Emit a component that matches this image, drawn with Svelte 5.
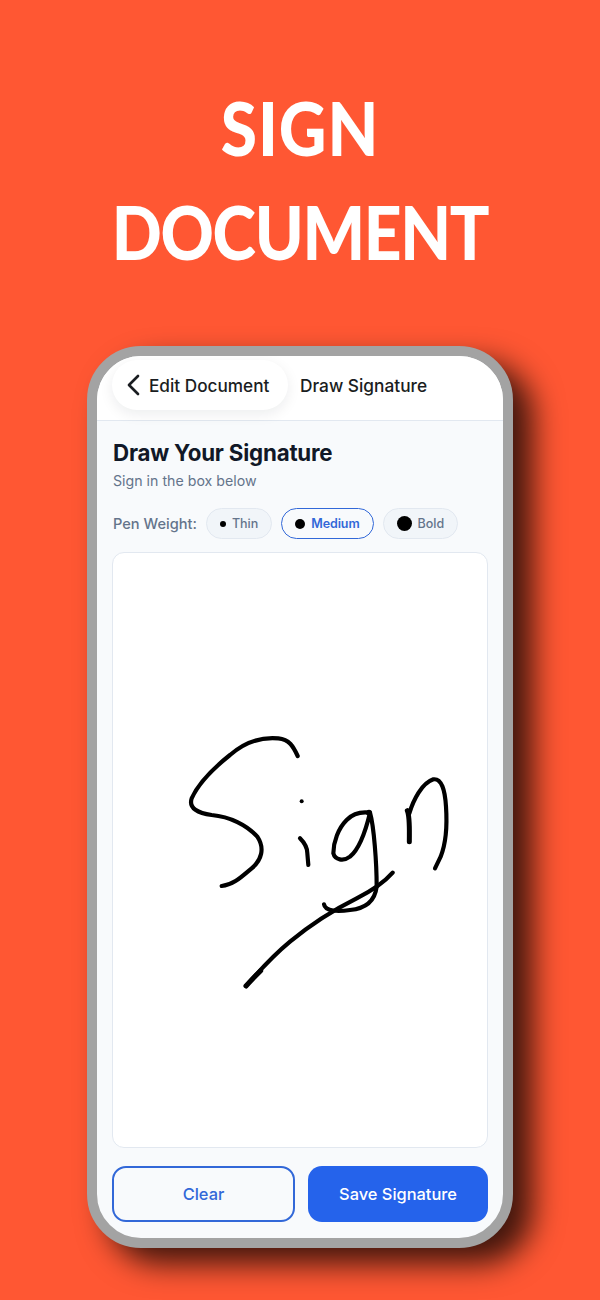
<script lang="ts">
  const weights = [
    { label: 'Thin', size: 6, active: false },
    { label: 'Medium', size: 10, active: true },
    { label: 'Bold', size: 15, active: false }
  ];

  // Strokes traced from the drawn signature
  const strokes = [
    'M383 108C370 80 358 58 325 55C270 50 220 70 180 105C130 145 85 190 65 235C55 265 85 280 125 285C180 290 230 315 262 350C285 385 275 420 245 445C215 470 190 495 155 498',
    'M390 355C405 370 412 385 412 400L415 435',
    'M597 278C570 275 545 285 530 300C505 325 490 365 490 400C495 420 520 425 540 410C570 385 590 320 600 278C612 320 620 430 620 500C615 540 590 565 540 570C505 575 465 575 462 553',
    'M718 280C730 240 755 190 790 178C815 175 825 210 828 260C832 320 828 370 812 410L795 445',
    'M668 458C640 490 610 510 560 535C490 570 420 615 360 665C315 702 270 750 228 798'
  ];
</script>

<div class="page">
  <h1>
    <span class="line sign">SIGN</span>
    <span class="line doc">DOCUMENT</span>
  </h1>

  <div class="phone">
    <header class="topbar">
      <div class="back">
        <svg width="14" height="22" viewBox="0 0 14 22" fill="none">
          <path d="M12 2L3 11L12 20" stroke="#1a1d21" stroke-width="2.7" stroke-linecap="round" stroke-linejoin="round" />
        </svg>
        <span>Edit Document</span>
      </div>
      <span class="screen-title">Draw Signature</span>
    </header>

    <main class="content">
      <h2>Draw Your Signature</h2>
      <p class="hint">Sign in the box below</p>

      <div class="pen-row">
        <span class="pen-label">Pen Weight:</span>
        {#each weights as w}
          <div class="chip" class:active={w.active}>
            <span class="dot" style="width: {w.size}px; height: {w.size}px"></span>
            {w.label}
          </div>
        {/each}
      </div>

      <div class="canvas">
        <svg class="signature" viewBox="0 0 900 840" fill="none">
          {#each strokes as d}
            <path {d} stroke="#000" stroke-width="12.5" stroke-linecap="round" stroke-linejoin="round" />
          {/each}
          <circle cx="395" cy="244" r="6" fill="#000" />
          <circle cx="597" cy="278" r="9" fill="#000" />
          <path d="M712 272C720 290 718 330 718 365" stroke="#000" stroke-width="15" stroke-linecap="round" />
          <path d="M228 798C245 779 256 768 272 752" stroke="#000" stroke-width="15" stroke-linecap="round" />
        </svg>
      </div>

      <div class="actions">
        <button class="btn clear">Clear</button>
        <button class="btn save">Save Signature</button>
      </div>
    </main>
  </div>
</div>

<style>
  :global(body) {
    margin: 0;
    background: #ff5733;
  }

  .page {
    width: 600px;
    height: 1300px;
    overflow: hidden;
    background: #ff5733;
    padding-top: 76px;
    box-sizing: border-box;
  }

  h1 {
    margin: 0 0 62px;
    text-align: center;
    color: #fff;
    font-family: 'Lato', sans-serif;
    font-weight: 900;
    font-size: 74px;
    line-height: 104px;
  }

  .line {
    display: block;
    transform: scaleX(0.89);
  }

  .sign {
    letter-spacing: 1px;
  }

  .doc {
    letter-spacing: -1.5px;
  }

  .phone {
    width: 426px;
    height: 902px;
    margin: 0 auto;
    box-sizing: border-box;
    border: 10px solid #a3a3a3;
    border-radius: 54px;
    background: #f8fafc;
    overflow: hidden;
    box-shadow: 20px 16px 30px rgba(0, 0, 0, 0.75);
    font-family: 'Inter', sans-serif;
    display: flex;
    flex-direction: column;
  }

  .topbar {
    height: 65px;
    flex: none;
    box-sizing: border-box;
    background: #fff;
    border-bottom: 1px solid #e2e8f0;
    display: flex;
    align-items: flex-start;
    padding: 4px 0 0 15px;
  }

  .back {
    width: 176px;
    height: 50px;
    box-sizing: border-box;
    border-radius: 25px;
    background: #fff;
    box-shadow: 0 4px 14px rgba(15, 23, 42, 0.08);
    display: flex;
    align-items: center;
    gap: 9px;
    padding-left: 14px;
    font-size: 17.2px;
    font-weight: 500;
    color: #1a1d21;
  }

  .screen-title {
    margin-left: 12px;
    line-height: 52px;
    font-size: 17.3px;
    font-weight: 500;
    color: #1a1d21;
  }

  .content {
    flex: 1;
    display: flex;
    flex-direction: column;
    padding: 0 15px 16px;
    min-height: 0;
  }

  h2 {
    margin: 18px 0 0 1px;
    font-size: 22.3px;
    line-height: 28px;
    font-weight: 700;
    color: #111827;
    letter-spacing: -0.2px;
  }

  .hint {
    margin: 4px 0 0 1px;
    font-size: 14.2px;
    line-height: 20px;
    color: #64748b;
  }

  .pen-row {
    display: flex;
    align-items: center;
    gap: 9px;
    margin: 17px 0 0 1px;
  }

  .pen-label {
    font-size: 14.6px;
    font-weight: 500;
    color: #64748b;
  }

  .chip {
    height: 31px;
    box-sizing: border-box;
    display: flex;
    align-items: center;
    gap: 6px;
    padding: 0 13px;
    border-radius: 16px;
    border: 1px solid #e2e8f0;
    background: #f1f5f9;
    font-size: 12.5px;
    font-weight: 500;
    color: #64748b;
  }

  .chip.active {
    border-color: #3268d8;
    background: #f8fafc;
    color: #3268d8;
    font-weight: 600;
    letter-spacing: -0.1px;
  }

  .dot {
    border-radius: 50%;
    background: #000;
  }

  .canvas {
    position: relative;
    flex: 1;
    margin-top: 13px;
    background: #fff;
    border: 1px solid #e2e8f0;
    border-radius: 12px;
  }

  .signature {
    position: absolute;
    left: 57px;
    top: 167px;
    width: 300px;
    height: 280px;
  }

  .actions {
    display: flex;
    gap: 13px;
    margin-top: 18px;
  }

  .btn {
    height: 56px;
    box-sizing: border-box;
    border-radius: 14px;
    font-family: inherit;
    font-size: 16.4px;
    font-weight: 500;
  }

  .clear {
    width: 183px;
    background: #f8fafc;
    border: 2px solid #3268d8;
    color: #3268d8;
  }

  .save {
    flex: 1;
    background: #2563eb;
    border: none;
    color: #fff;
  }
</style>
